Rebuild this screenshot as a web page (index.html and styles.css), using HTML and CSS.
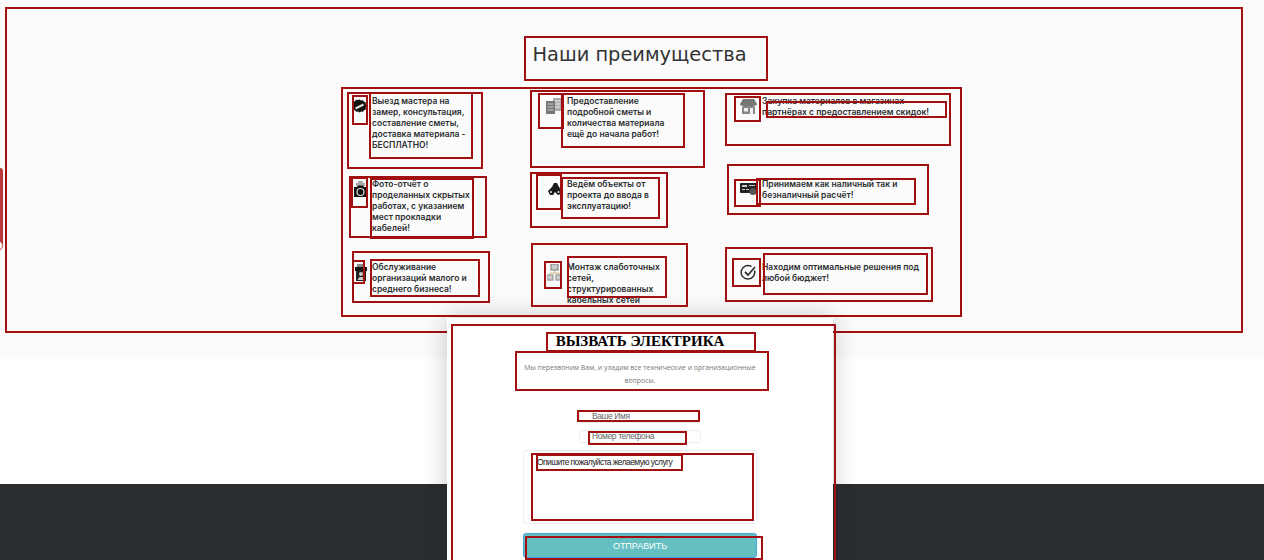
FILE: index.html
```html
<!DOCTYPE html>
<html lang="ru">
  <head>
    <meta charset="UTF-8" />
    <meta name="viewport" content="width=device-width, initial-scale=1.0" />
    <title>Наши преимущества</title>
    <link rel="stylesheet" href="styles.css">
  </head>
  <body>
    <main class="page">
      <section class="benefits">
        <h2 class="benefits-title">Наши преимущества</h2>
        <div class="benefits-grid">
          <article class="benefit">
            <span class="benefit-icon">
              <svg width="15" height="15" viewBox="0 0 15 15"><path d="M7.5 .5l1.6 1 1.900-.3 1 1.600 1.800.8-.1 1.900 1.200 1.500-1.200 1.500.1 1.900-1.800.8-1 1.600-1.900-.3-1.600 1-1.600-1-1.900.3-1-1.600-1.800-.8.1-1.900L.1 6.500l1.200-1.500-.1-1.900L3 2.300l1-1.600 1.900.3z" fill="#111"/><path d="M3.500 9.500l8-4" stroke="#ddd" stroke-width="2"/></svg>
            </span>
            <p>Выезд мастера на<br>замер, консультация,<br>составление сметы,<br>доставка материала -<br>БЕСПЛАТНО!</p>
          </article>
          <article class="benefit">
            <span class="benefit-icon">
              <svg width="16" height="16" viewBox="0 0 16 16"><rect x="7" y="0" width="9" height="13" fill="#aaa"/><path d="M9 3h5M9 6h5M9 9h5" stroke="#eee"/><rect x="0" y="3" width="9" height="13" fill="#777"/><path d="M1.500 6h6M1.500 9h6M1.500 12h6" stroke="#ccc"/></svg>
            </span>
            <p>Предоставление<br>подробной сметы и<br>количества материала<br>ещё до начала работ!</p>
          </article>
          <article class="benefit">
            <span class="benefit-icon">
              <svg width="17" height="15" viewBox="0 0 17 15"><path d="M3 0h11l3 5a2 2 0 0 1-3 1.500 2.500 2.500 0 0 1-5.500 0 2.500 2.500 0 0 1-5.500 0A2 2 0 0 1 0 5z" fill="#777"/><path d="M2 7.500h13V15H2z" fill="#888"/><rect x="4" y="9" width="4" height="3.500" fill="#eee"/><rect x="10" y="9" width="3" height="6" fill="#eee"/></svg>
            </span>
            <p>Закупка материалов в магазинах-<br>партнёрах с предоставлением скидок!</p>
          </article>
          <article class="benefit">
            <span class="benefit-icon">
              <svg width="13" height="16" viewBox="0 0 13 16"><path d="M4 0h5v2h2v3H2V2h2z" fill="#aaa"/><path d="M0 6h3l1-1.500h5L10 6h3v10H0z" fill="#111"/><circle cx="6.500" cy="11" r="3.500" fill="none" stroke="#ddd" stroke-width="1.200"/></svg>
            </span>
            <p>Фото-отчёт о<br>проделанных скрытых<br>работах, с указанием<br>мест прокладки<br>кабелей!</p>
          </article>
          <article class="benefit">
            <span class="benefit-icon">
              <svg width="14" height="12" viewBox="0 0 14 12"><path d="M0 8l4-4 2-4h3l2 4 3 4-1 3-3 1-3-3-2 3H2z" fill="#1a1a1a"/><circle cx="3" cy="9" r="1" fill="#eee"/><circle cx="10.500" cy="9" r="1" fill="#eee"/></svg>
            </span>
            <p>Ведём объекты от<br>проекта до ввода в<br>эксплуатацию!</p>
          </article>
          <article class="benefit">
            <span class="benefit-icon">
              <svg width="17" height="12" viewBox="0 0 17 12"><rect width="17" height="10" rx="1" fill="#222"/><path d="M2 2h5v2H2zM9 2h6v1H9zM2 6h3v1H2zM6 6h3v1H6z" fill="#ccc"/><circle cx="13" cy="8.500" r="3.500" fill="#555"/></svg>
            </span>
            <p>Принимаем как наличный так и<br>безналичный расчёт!</p>
          </article>
          <article class="benefit">
            <span class="benefit-icon">
              <svg width="12" height="17" viewBox="0 0 12 17"><rect x="2" y="0" width="8" height="3" fill="#888"/><rect y="3" width="12" height="4" fill="#111"/><rect x="1" y="7" width="10" height="10" fill="#222"/><circle cx="6" cy="10" r="2" fill="#ccc"/><path d="M2.500 16l2-3h3l2 3z" fill="#ccc"/></svg>
            </span>
            <p>Обслуживание<br>организаций малого и<br>среднего бизнеса!</p>
          </article>
          <article class="benefit">
            <span class="benefit-icon">
              <svg width="15" height="17" viewBox="0 0 15 17"><rect x="4" y="0" width="7" height="6" fill="#ccc" stroke="#888" stroke-width="1.200"/><path d="M7.500 6v3M3 11V9h9v2" stroke="#c8b878" fill="none"/><rect x="0" y="11" width="6" height="5" fill="#ccc" stroke="#999" stroke-width="1.200"/><rect x="9" y="11" width="6" height="5" fill="#ccc" stroke="#999" stroke-width="1.200"/></svg>
            </span>
            <p>Монтаж слаботочных<br>сетей,<br>структурированных<br>кабельных сетей</p>
          </article>
          <article class="benefit">
            <span class="benefit-icon">
              <svg width="17" height="17" viewBox="0 0 17 17"><path d="M14.500 6.500a6.800 6.800 0 1 1-3-4" fill="none" stroke="#333" stroke-width="1.500"/><path d="M5 8l3 3 7-8" fill="none" stroke="#333" stroke-width="1.800"/></svg>
            </span>
            <p>Находим оптимальные решения под<br>любой бюджет!</p>
          </article>
        </div>
        <i class="mark mark-outer"></i>
      </section>
      <div class="gap"></div>
      <footer class="footer"></footer>

      <aside class="side-tab"></aside>

      <form class="call-modal">
        <h3>ВЫЗВАТЬ ЭЛЕКТРИКА</h3>
        <p>Мы перезвоним Вам, и уладим все технические и организационные вопросы.</p>
        <input type="text" placeholder="Ваше Имя" />
        <input type="text" placeholder="Номер телефона" />
        <textarea placeholder="Опишите пожалуйста желаемую услугу"></textarea>
        <button type="button">ОТПРАВИТЬ</button>
      </form>

      <div class="marks">
        <i class="mark m-title"></i>
        <i class="mark m-grid"></i>
        <i class="mark m1"></i><i class="mark m1i"></i><i class="mark m1t"></i>
        <i class="mark m2"></i><i class="mark m2i"></i><i class="mark m2t"></i>
        <i class="mark m3"></i><i class="mark m3i"></i><i class="mark m3t"></i>
        <i class="mark m4"></i><i class="mark m4i"></i><i class="mark m4t"></i>
        <i class="mark m5"></i><i class="mark m5i"></i><i class="mark m5t"></i>
        <i class="mark m6"></i><i class="mark m6i"></i><i class="mark m6t"></i>
        <i class="mark m7"></i><i class="mark m7i"></i><i class="mark m7t"></i>
        <i class="mark m8"></i><i class="mark m8i"></i><i class="mark m8t"></i>
        <i class="mark m9"></i><i class="mark m9i"></i><i class="mark m9t"></i>
        <i class="mark m-modal"></i>
        <i class="mark m-head"></i>
        <i class="mark m-desc"></i>
        <i class="mark m-name"></i>
        <i class="mark m-phone"></i>
        <i class="mark m-area"></i>
        <i class="mark m-hint"></i>
        <i class="mark m-send"></i>
      </div>
    </main>
  </body>
</html>
```

FILE: styles.css
```css
html,
body {
  margin: 0;
  padding: 0;
  height: 560px;
  overflow: hidden;
  background-color: #fff;
}
.page {
  position: relative;
  height: 560px;
  overflow: hidden;
  display: flex;
  flex-direction: column;
}
.benefits {
  height: 358px;
  flex: none;
  box-sizing: border-box;
  padding-top: 42px;
  background-color: #fbfbfb;
}
.benefits-title {
  margin: 0 0 28px;
  padding-left: 15px;
  text-align: center;
  font-family: "DejaVu Sans", sans-serif;
  font-size: 19.4px;
  font-weight: 400;
  line-height: 26px;
  color: #333;
}
.benefits-grid {
  display: grid;
  grid-template-columns: repeat(3, 195px);
  grid-auto-rows: 83px;
  margin-left: 345px;
}
.benefit {
  display: flex;
  align-items: flex-start;
  gap: 5px;
}
.benefit-icon {
  width: 22px;
  height: 16px;
  flex: none;
  display: flex;
  align-items: center;
  justify-content: flex-end;
  padding-top: 2px;
}
.benefit p {
  margin: 0;
  font-family: Inter, sans-serif;
  font-size: 8.5px;
  font-weight: 600;
  line-height: 11px;
  white-space: nowrap;
  color: #2b2e31;
}
.gap {
  flex: 1;
}
.footer {
  height: 76px;
  flex: none;
  background-color: #2b2e31;
}
.side-tab {
  position: absolute;
  left: 0;
  top: 168px;
  width: 3px;
  height: 78px;
  border-radius: 0 3px 3px 0;
  background-color: #b8393e;
}
.side-tab::after {
  content: "";
  position: absolute;
  left: -8px;
  top: 72px;
  width: 9px;
  height: 9px;
  border: 1px solid #b8393e;
  border-radius: 50%;
  background-color: #fff;
}
.call-modal {
  position: absolute;
  left: 447px;
  top: 318px;
  width: 386px;
  height: 260px;
  box-sizing: border-box;
  padding-top: 14px;
  display: flex;
  flex-direction: column;
  align-items: center;
  background-color: #fff;
  box-shadow: 0 0 25px rgba(0, 0, 0, 0.22);
}
.call-modal h3 {
  margin: 0;
  font-family: "Liberation Serif", serif;
  font-size: 15px;
  font-weight: 700;
  line-height: 18px;
  color: #000;
}
.call-modal p {
  width: 245px;
  margin: 11px 0 23px;
  text-align: center;
  font-family: "Open Sans", sans-serif;
  font-size: 6.9px;
  line-height: 13px;
  color: #777;
}
.call-modal input,
.call-modal textarea {
  display: block;
  box-sizing: border-box;
  margin: 0;
  border: 1px solid #eee;
  border-radius: 3px;
  outline: none;
  resize: none;
  background-color: #fff;
  font-family: "Liberation Sans", sans-serif;
  font-size: 8.5px;
  letter-spacing: -0.6px;
}
.call-modal input {
  width: 122px;
  height: 13px;
  padding: 0 12px 2px;
  margin-bottom: 7px;
  letter-spacing: -0.4px;
}
.call-modal input::placeholder {
  color: #666;
}
.call-modal textarea {
  width: 234px;
  height: 74px;
  padding: 6px 13px;
}
.call-modal textarea::placeholder {
  color: #222;
}
.call-modal button {
  width: 234px;
  height: 25px;
  margin-top: 9px;
  padding: 0;
  border: 1px solid #4aa3dd;
  border-radius: 3px;
  background-color: #64c0c0;
  color: #fff;
  font-family: "Liberation Sans", sans-serif;
  font-size: 9px;
}

/* debug outlines drawn over the page */
.marks {
  position: absolute;
  inset: 0;
  pointer-events: none;
}
.mark {
  position: absolute;
  display: block;
  box-sizing: border-box;
  border: 2px solid #a10f10;
}
.mark-outer { left: 5px; top: 7px; width: 1238px; height: 326px; }
.m-title { left: 524px; top: 36px; width: 244px; height: 45px; }
.m-grid { left: 341px; top: 87px; width: 621px; height: 230px; }
.m1 { left: 347px; top: 92px; width: 136px; height: 77px; }
.m1i { left: 352px; top: 95px; width: 16px; height: 30px; }
.m1t { left: 369px; top: 92px; width: 104px; height: 67px; }
.m2 { left: 530px; top: 90px; width: 175px; height: 78px; }
.m2i { left: 538px; top: 93px; width: 26px; height: 36px; }
.m2t { left: 561px; top: 93px; width: 124px; height: 55px; }
.m3 { left: 725px; top: 93px; width: 226px; height: 53px; }
.m3i { left: 734px; top: 96px; width: 27px; height: 26px; }
.m3t { left: 766px; top: 101px; width: 181px; height: 17px; }
.m4 { left: 349px; top: 176px; width: 138px; height: 62px; }
.m4i { left: 351px; top: 177px; width: 17px; height: 31px; }
.m4t { left: 370px; top: 178px; width: 104px; height: 61px; }
.m5 { left: 530px; top: 172px; width: 138px; height: 56px; }
.m5i { left: 536px; top: 174px; width: 26px; height: 36px; }
.m5t { left: 561px; top: 177px; width: 99px; height: 42px; }
.m6 { left: 727px; top: 164px; width: 202px; height: 51px; }
.m6i { left: 734px; top: 179px; width: 27px; height: 28px; }
.m6t { left: 756px; top: 178px; width: 160px; height: 27px; }
.m7 { left: 352px; top: 251px; width: 138px; height: 52px; }
.m7i { left: 352px; top: 260px; width: 13px; height: 24px; }
.m7t { left: 370px; top: 259px; width: 110px; height: 38px; }
.m8 { left: 531px; top: 243px; width: 157px; height: 64px; }
.m8i { left: 544px; top: 261px; width: 18px; height: 28px; }
.m8t { left: 567px; top: 256px; width: 100px; height: 42px; }
.m9 { left: 725px; top: 247px; width: 208px; height: 55px; }
.m9i { left: 732px; top: 258px; width: 29px; height: 29px; }
.m9t { left: 763px; top: 253px; width: 165px; height: 42px; }
.m-modal { left: 451px; top: 324px; width: 385px; height: 260px; }
.m-head { left: 546px; top: 332px; width: 210px; height: 20px; }
.m-desc { left: 515px; top: 351px; width: 254px; height: 40px; }
.m-name { left: 577px; top: 410px; width: 123px; height: 12px; }
.m-phone { left: 588px; top: 431px; width: 99px; height: 14px; }
.m-area { left: 531px; top: 453px; width: 223px; height: 68px; }
.m-hint { left: 536px; top: 454px; width: 147px; height: 17px; }
.m-send { left: 525px; top: 536px; width: 238px; height: 24px; }
```
